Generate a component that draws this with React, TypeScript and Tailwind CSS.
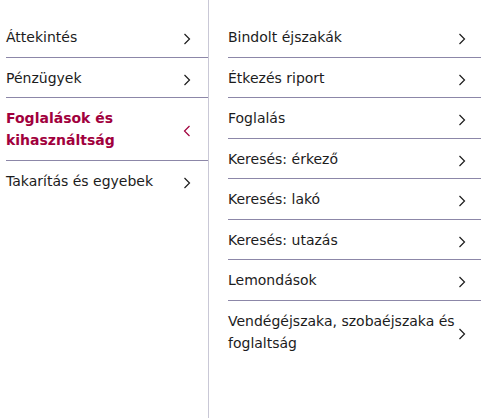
import React from 'react';

const left = [
  { label: 'Áttekintés' },
  { label: 'Pénzügyek' },
  { label: 'Foglalások és kihasználtság', active: true },
  { label: 'Takarítás és egyebek' },
];

const right = [
  'Bindolt éjszakák',
  'Étkezés riport',
  'Foglalás',
  'Keresés: érkező',
  'Keresés: lakó',
  'Keresés: utazás',
  'Lemondások',
  'Vendégéjszaka, szobaéjszaka és foglaltság',
];

function Chevron({ back, className }: { back?: boolean; className?: string }) {
  return (
    <svg width="8" height="12" viewBox="0 0 8 12" fill="none" className={className}>
      <path
        d={back ? 'M6.5 1 L1.5 6 L6.5 11' : 'M1.5 1 L6.5 6 L1.5 11'}
        stroke="currentColor"
        strokeWidth="1.2"
      />
    </svg>
  );
}

export default function App() {
  return (
    <div className="flex min-h-[418px] w-[481px] bg-white text-[14px] leading-[22px] text-[#1c1c1c] font-['DejaVu_Sans',sans-serif]">
      <div className="w-[209px] shrink-0 border-r border-[#c9c8d6] pl-[6px] pt-[17px]">
        {left.map((item, i) => (
          <div
            key={item.label}
            className={`flex items-center justify-between pr-[17px] pt-[9px] pb-[8.5px] ${
              i < left.length - 1 ? 'border-b border-[#8c87a8]' : ''
            } ${item.active ? 'font-bold text-[#a1003d]' : ''}`}
          >
            <span className={item.active ? 'w-[150px]' : ''}>{item.label}</span>
            <Chevron back={item.active} className={`mt-1 ${item.active ? 'text-[#a1003d]' : ''}`} />
          </div>
        ))}
      </div>
      <div className="flex-1 pl-[19px] pt-[17px]">
        {right.map((label, i) => (
          <div
            key={label}
            className={`flex items-center justify-between pr-[15px] pt-[9px] pb-[8.5px] ${
              i < right.length - 1 ? 'border-b border-[#8c87a8]' : ''
            }`}
          >
            <span className="max-w-[235px]">{label}</span>
            <Chevron className="mt-1 shrink-0" />
          </div>
        ))}
      </div>
    </div>
  );
}
